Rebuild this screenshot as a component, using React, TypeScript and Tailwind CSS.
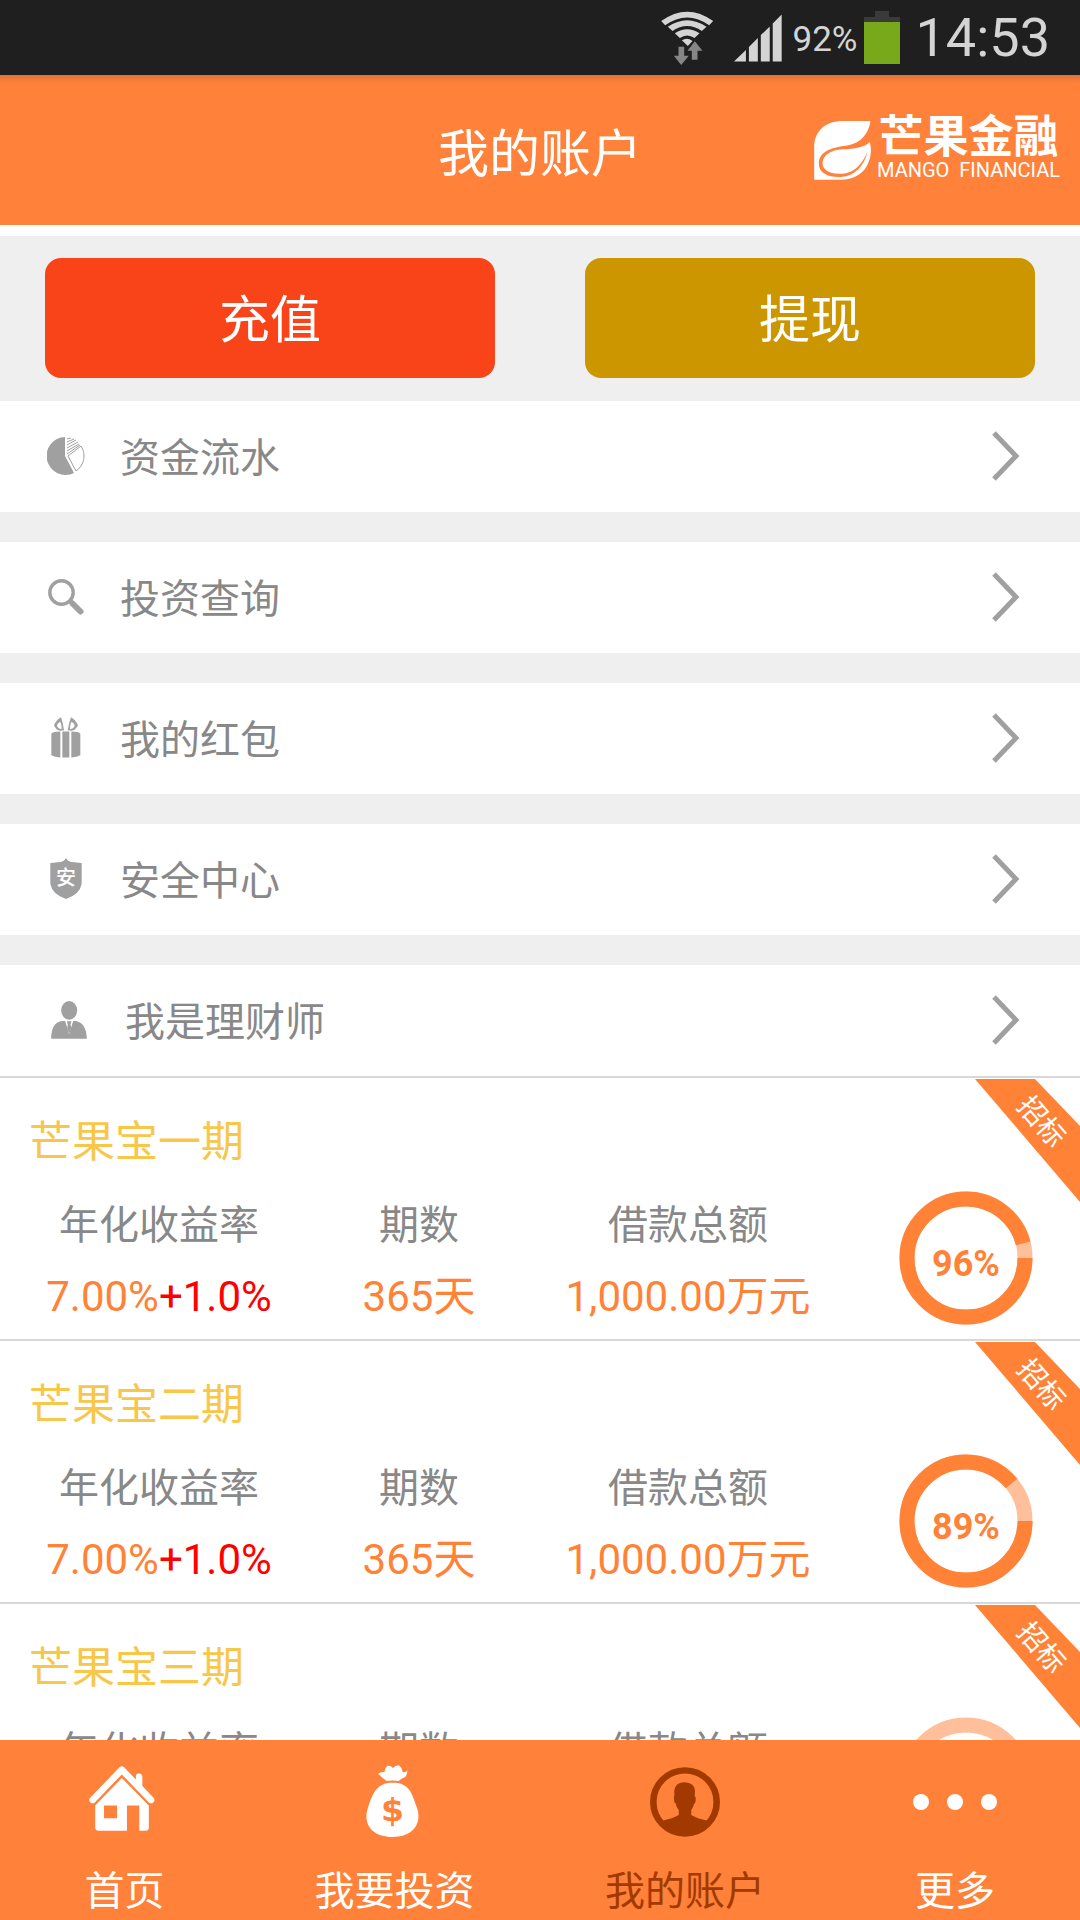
import type { ReactNode } from "react";

const CJK = "font-[Roboto,'Noto_Sans_CJK_SC',sans-serif]";

function WifiIcon() {
  return (
    <svg viewBox="60 28 158 162" className="h-[54px] w-[53px]" aria-hidden="true">
      <g fill="#d4d4d4">
        <path d="M60 58 Q138 2 216 58 L204 71 Q138 24 72 71 Z" />
        <path d="M80 75 Q138 36 196 75 L182 88 Q138 58 94 88 Z" />
        <path d="M101 95 Q138 70 175 95 L160 109 Q138 94 116 109 Z" />
        <path d="M122 116 Q138 106 154 118 L140 133 Z" />
      </g>
      <g fill="#868686" stroke="#1f1f1f" strokeWidth="2" paintOrder="stroke">
        <path d="M112 135 H129 V162 H143 L120 190 L98 162 H112 Z" />
        <path d="M161 119 L184 147 H169 V174 H152 V147 H139 Z" />
      </g>
    </svg>
  );
}

function SignalIcon() {
  return (
    <svg viewBox="282 46 145 144" className="h-12 w-12" fill="#d4d4d4" aria-hidden="true">
      <path d="M282 189 L318 154 V189 Z M327 145 L354 118 V189 H327 Z M363 109 L390 83 V189 H363 Z M399 74 L426 47 V189 H399 Z" />
    </svg>
  );
}

function BatteryIcon() {
  return (
    <svg viewBox="0 0 36 53" className="h-[53px] w-9" aria-hidden="true">
      <path d="M11 0 H25 V6 H36 V12 H0 V6 H11 Z" fill="#3a3a3a" />
      <rect y="11" width="36" height="42" fill="#78a91a" />
    </svg>
  );
}

function LeafLogo() {
  return (
    <svg viewBox="105 93 170 177" className="h-[59px] w-[57px]" fill="white" aria-hidden="true">
      <path d="M105 269 V172 C105 122 140 93 190 93 H274 C268 132 245 158 208 166 C165 172 119 180 119 222 C119 250 150 263 185 261 C228 258 255 228 266 182 C252 218 228 248 190 251 C152 254 129 240 130 218 C132 195 155 180 190 178 C225 176 258 172 272 155 C279 182 275 215 255 240 C235 262 210 269 185 269 Z" />
    </svg>
  );
}

function PieIcon() {
  return (
    <svg viewBox="0 0 38 38" className="h-[38px] w-[38px]" aria-hidden="true">
      <path d="M18 0 A19 19 0 1 0 27 36 L18 19 Z" fill="#a0a0a0" />
      <path d="M21 19 L34 9 A18 18 0 0 1 29 34 Z" fill="none" stroke="#a0a0a0" strokeWidth="1" />
      <path d="M20 2 L24 1 M20 5 L27 2 M20 8 L29 3 M20 11 L31 5 M20 14 L32 7 M20 17 L33 8" stroke="#a0a0a0" strokeWidth="1" />
    </svg>
  );
}

function SearchIcon() {
  return (
    <svg viewBox="0 0 36 36" className="h-9 w-9" fill="none" stroke="#a0a0a0" aria-hidden="true">
      <circle cx="13.5" cy="13.5" r="11.7" strokeWidth="3.4" />
      <path d="M22 22 L24 24" strokeWidth="4" />
      <path d="M24.5 24.5 L32.5 32.5" strokeWidth="6" strokeLinecap="round" />
    </svg>
  );
}

function GiftIcon() {
  return (
    <svg viewBox="65 473 90 122" className="h-[41px] w-[30px]" fill="#a0a0a0" aria-hidden="true">
      <path fillRule="evenodd" d="M95 473 Q101 489 104 512 L93 514 Q80 512 74 497 Q81 481 95 473 Z M92 487 Q83 493 83 499 Q87 509 97 509 Q97 493 92 487 Z" />
      <path fillRule="evenodd" d="M125 473 Q119 489 115 512 L126 514 Q139 512 146 497 Q139 481 125 473 Z M127 487 Q136 493 136 499 Q132 509 122 509 Q122 493 127 487 Z" />
      <path d="M93 516 V594 Q76 593 66 587 V523 Q70 516 93 516 Z M99 516 H120 V594 H99 Z M126 516 Q149 516 153 523 V587 Q143 593 126 594 Z" />
    </svg>
  );
}

function ShieldIcon() {
  return (
    <span className="relative flex h-[41px] w-8 justify-center">
      <svg viewBox="60 87 94 123" className="absolute inset-0 h-full w-full" fill="#a0a0a0" aria-hidden="true">
        <path d="M107 87 Q114 101 134 100 Q144 102 154 102 V164 Q149 195 107 210 Q65 195 60 164 V102 Q70 102 80 100 Q100 101 107 87 Z" />
      </svg>
      <span className="relative mt-1.5 text-[20px] leading-[28px] font-medium text-white">安</span>
    </span>
  );
}

function AdvisorIcon() {
  return (
    <svg viewBox="62 512 107 114" className="h-[38px] w-9" fill="#a0a0a0" aria-hidden="true">
      <ellipse cx="116" cy="540" rx="24" ry="28" />
      <path d="M62 625 Q62 575 96 572 H104 L116 612 L128 572 H136 Q167 577 169 625 Z" />
      <path d="M109 573 H123 L120 583 L123 592 L116 610 L110 592 L112 583 Z" />
    </svg>
  );
}

function Chevron() {
  return (
    <svg viewBox="0 0 28 50" className="h-[50px] w-7" fill="none" stroke="#a0a0a0" strokeWidth="5" aria-hidden="true">
      <path d="M2 2 L24 25 L2 48" />
    </svg>
  );
}

function HomeIcon() {
  return (
    <svg viewBox="255 137 193 194" preserveAspectRatio="none" className="mr-1.5 mb-2 h-[65px] w-[66px]" fill="white" aria-hidden="true">
      <path d="M345 140 Q351 135 357 140 L392 177 V167 Q393 159 402 159 Q410 160 411 168 V197 L445 233 Q449 240 443 246 Q437 251 430 246 L351 162 L272 246 Q266 251 259 246 Q253 240 257 233 Z" />
      <path fillRule="evenodd" d="M351 173 L430 255 V322 Q429 330 421 330 H402 V255 H366 V330 H281 Q274 330 273 322 V255 Z M299 255 V293 H337 V255 Z" />
    </svg>
  );
}

function MoneyBagIcon() {
  return (
    <svg viewBox="1064 136 154 215" preserveAspectRatio="none" className="mr-1 mb-0.5 h-[72px] w-[53px]" fill="white" aria-hidden="true">
      <path d="M1099 162 Q1107 155 1118 157 Q1119 143 1127 138 Q1137 137 1142 145 Q1148 138 1160 137 Q1168 143 1170 156 Q1180 160 1184 152 Q1184 170 1174 174 Q1164 178 1159 184 Q1141 180 1124 184 Q1112 175 1099 162 Z" />
      <path d="M1141 189 C1190 188 1197 220 1212 263 C1228 312 1200 351 1141 351 C1082 351 1053 312 1070 263 C1083 220 1097 188 1141 189 Z" />
      <text x="1141" y="304" textAnchor="middle" fill="#ff813a" fontSize="96" fontWeight="700" fontFamily="DejaVu Sans, sans-serif">$</text>
    </svg>
  );
}

function AccountIcon() {
  return (
    <svg viewBox="317 532 202 210" preserveAspectRatio="none" className="h-[70px] w-[70px]" fill="#a23a00" aria-hidden="true">
      <ellipse cx="418" cy="637" rx="91.5" ry="95" fill="none" stroke="#a23a00" strokeWidth="19" />
      <path d="M350 694 Q385 686 400 676 V661 Q393 654 391 641 Q386 640 386 621 Q388 620 387 603 Q390 578 417 578 Q446 580 447 603 L446 620 Q450 622 449 632 Q448 641 444 643 Q442 653 436 661 V676 Q450 686 486 694 Q462 735 418 735 Q374 735 350 694 Z" />
    </svg>
  );
}

function MoreIcon() {
  return (
    <svg viewBox="0 0 84 70" className="h-[70px] w-[84px]" fill="white" aria-hidden="true">
      <circle cx="8" cy="35" r="8" />
      <circle cx="42" cy="35" r="8" />
      <circle cx="76" cy="35" r="8" />
    </svg>
  );
}

const menu: { label: string; icon: ReactNode; wide?: boolean }[] = [
  { label: "资金流水", icon: <PieIcon /> },
  { label: "投资查询", icon: <SearchIcon /> },
  { label: "我的红包", icon: <GiftIcon /> },
  { label: "安全中心", icon: <ShieldIcon /> },
  { label: "我是理财师", icon: <AdvisorIcon />, wide: true },
];

const products = [
  { name: "芒果宝一期", percent: 96 },
  { name: "芒果宝二期", percent: 89 },
  { name: "芒果宝三期", percent: 0 },
];

const tabs = [
  { label: "首页", icon: <HomeIcon />, active: false },
  { label: "我要投资", icon: <MoneyBagIcon />, active: false },
  { label: "我的账户", icon: <AccountIcon />, active: true },
  { label: "更多", icon: <MoreIcon />, active: false },
];

function ProgressRing({ percent }: { percent: number }) {
  return (
    <div className="relative flex h-[134px] w-[134px] items-center justify-center">
      <svg viewBox="0 0 134 134" className="absolute inset-0 h-full w-full" fill="none" strokeWidth="15" aria-hidden="true">
        <circle cx="67" cy="67" r="59" stroke="#ffbf9b" />
        {percent > 0 && (
          <circle cx="67" cy="67" r="59" stroke="#ff8236" pathLength="100" strokeDasharray={`${percent} 100`} />
        )}
      </svg>
      <span className="relative mt-3 text-[36px] leading-[44px] font-bold text-[#ff8236]">{percent}%</span>
    </div>
  );
}

function Stat({ label, children }: { label: string; children: ReactNode }) {
  return (
    <div className="flex flex-col items-center pt-[5px] whitespace-nowrap">
      <dt className="text-[40px] leading-[60px] text-[#888]">{label}</dt>
      <dd className="mt-[11px] text-[42px] leading-[60px] text-[#ff8236]">{children}</dd>
    </div>
  );
}

function ProductCard({ name, percent }: { name: string; percent: number }) {
  return (
    <article className="relative h-[263px] overflow-hidden border-t-2 border-[#d8d8d8] pt-[34px]">
      <h2 className="pl-[29px] text-[43px] leading-[60px] text-[#f8c74a]">{name}</h2>
      <dl className="mt-[19px] grid grid-cols-[318fr_202fr_336fr_220fr] pr-1">
        <Stat label="年化收益率">
          7.00%<span className="text-[#f00]">+1.0%</span>
        </Stat>
        <Stat label="期数">365天</Stat>
        <Stat label="借款总额">1,000.00万元</Stat>
        <div className="flex justify-center">
          <ProgressRing percent={percent} />
        </div>
      </dl>
      <div className="absolute top-px right-0 h-[123px] w-[105px]">
        <svg viewBox="0 0 105 123" className="h-full w-full" aria-hidden="true">
          <path d="M0 0 H60 L105 47 V123 Z" fill="#ff8236" />
        </svg>
        <span className="absolute top-[23px] left-[38px] rotate-[49deg] text-[28px] leading-[40px] whitespace-nowrap text-white">招标</span>
      </div>
    </article>
  );
}

export default function App() {
  return (
    <div className={`flex h-screen flex-col overflow-hidden bg-white ${CJK}`}>
      <div className="flex h-[75px] shrink-0 items-center justify-end bg-[#1f1f1f] pr-[30px] text-[#d4d4d4]">
        <WifiIcon />
        <div className="ml-5">
          <SignalIcon />
        </div>
        <span className="ml-[11px] pt-1 text-[35px] leading-[75px]">92%</span>
        <div className="ml-1.5">
          <BatteryIcon />
        </div>
        <span className="ml-4 text-[54px] leading-[75px]">14:53</span>
      </div>

      <header className="grid h-[150px] shrink-0 grid-cols-[1fr_auto_1fr] items-center bg-[#ff813a] bg-[linear-gradient(#df7236,#ff813a_8px)] px-5 text-white">
        <h1 className="col-start-2 pt-2 text-[51px] leading-[75px]">我的账户</h1>
        <div className="flex items-center gap-1.5 justify-self-end">
          <LeafLogo />
          <div className="flex flex-col items-center whitespace-nowrap">
            <span className="text-[45px] leading-[40px] font-bold">芒果金融</span>
            <span className="text-[20px] leading-[24px]">MANGO&nbsp; FINANCIAL</span>
          </div>
        </div>
      </header>

      <main className="min-h-0 flex-1 overflow-y-auto pt-[11px] [scrollbar-width:none]">
        <section className="grid grid-cols-2 gap-[90px] bg-[#efefef] px-[45px] pt-[22px] pb-[23px] text-[51px] text-white">
          <button type="button" className="h-[120px] rounded-2xl bg-[#f94419] pt-1.5">充值</button>
          <button type="button" className="h-[120px] rounded-2xl bg-[#cc9600] pt-1.5">提现</button>
        </section>

        <nav className="flex flex-col gap-[30px] bg-[#efefef]" aria-label="账户">
          {menu.map((item) => (
            <a key={item.label} href="#" className={`flex h-[111px] items-center bg-white pr-[60px] pb-0.5 ${item.wide ? "pl-[51px]" : "pl-[46px]"}`}>
              <span className="flex w-[74px] items-center">
                <span className={item.wide ? "" : "flex w-10 justify-center"}>{item.icon}</span>
              </span>
              <span className="flex-1 pt-1.5 text-[40px] leading-[60px] text-[#888]">{item.label}</span>
              <Chevron />
            </a>
          ))}
        </nav>

        <section>
          {products.map((product) => (
            <ProductCard key={product.name} {...product} />
          ))}
        </section>
      </main>

      <nav className="grid h-[180px] shrink-0 grid-cols-[249fr_291fr_290fr_250fr] bg-[#ff813a]" aria-label="主导航">
        {tabs.map((tab) => (
          <a key={tab.label} href="#" aria-current={tab.active ? "page" : undefined} className={`flex flex-col items-center pt-6 whitespace-nowrap ${tab.active ? "text-[#a23a00]" : "text-white"}`}>
            <span className="flex h-[76px] items-center">{tab.icon}</span>
            <span className="mt-[22px] text-[40px] leading-[60px]">{tab.label}</span>
          </a>
        ))}
      </nav>
    </div>
  );
}
